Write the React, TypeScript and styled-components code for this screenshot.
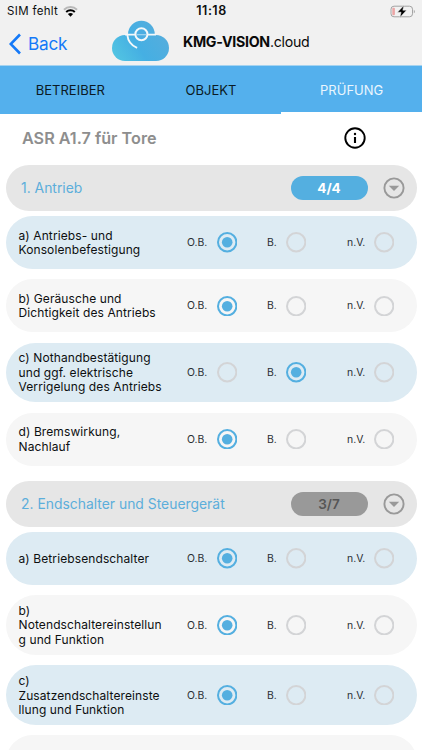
import React, { useState } from "react";
import styled, { createGlobalStyle } from "styled-components";

const GlobalStyle = createGlobalStyle`
  * { box-sizing: border-box; }
  html, body { margin: 0; padding: 0; }
  body {
    background: #fff;
    font-family: Inter, "Liberation Sans", sans-serif;
    color: #0d0f10;
    overflow: hidden;
  }
  button { font: inherit; border: 0; background: none; padding: 0; cursor: pointer; }
`;

const Screen = styled.div`
  width: 422px;
  height: 750px;
  overflow: hidden;
  background: #fff;
`;

const Header = styled.header`
  height: 66px;
  background: #f1f1f1;
  border-bottom: 1px solid #a5d3f0;
`;

const StatusBar = styled.div`
  height: 22px;
  display: grid;
  grid-template-columns: 1fr 60px 1fr;
  align-items: center;
  padding: 0 6px 0 7px;
`;

const Carrier = styled.span`
  display: flex;
  align-items: center;
  gap: 5px;
  font-size: 11.5px;
  letter-spacing: 0.33px;
  line-height: 22px;
`;

const Clock = styled.span`
  font-size: 12.5px;
  font-weight: 600;
  text-align: center;
  letter-spacing: 0.5px;
  line-height: 22px;
`;

const BatteryBox = styled.span`
  display: flex;
  justify-content: flex-end;
`;

const NavBar = styled.div`
  height: 43px;
  display: flex;
  align-items: flex-start;
  padding-left: 9px;
`;

const BackButton = styled.button`
  display: flex;
  align-items: center;
  gap: 7px;
  width: 102px;
  height: 43px;
  color: #1479f8;
  font-size: 17.2px;
  letter-spacing: -0.2px;
`;

const LogoBox = styled.span`
  display: flex;
  width: 72px;
  margin-top: -3px;
`;

const Brand = styled.span`
  height: 39px;
  line-height: 39px;
  font-size: 14.2px;
  letter-spacing: -0.28px;
  color: #0a0a0a;
  b { font-weight: 700; }
`;

const Tabs = styled.nav`
  height: 48px;
  display: grid;
  grid-template-columns: repeat(3, 1fr);
  background: #54b0ed;
`;

const Tab = styled.button<{ $active: boolean }>`
  height: 48px;
  padding-top: 2px;
  font-size: 13px;
  color: ${(p) => (p.$active ? "#eaf6fe" : "#0b1a24")};
  border-bottom: 2px solid ${(p) => (p.$active ? "#fff" : "#54b0ed")};
`;

const TitleRow = styled.div`
  height: 51px;
  display: flex;
  align-items: center;
  justify-content: space-between;
  padding: 0 56px 4px 22px;
`;

const Title = styled.h1`
  margin: 0;
  font-size: 16.2px;
  font-weight: 600;
  color: #8e8e8e;
`;

const Section = styled.section`
  margin: 0 5.5px 15.2px;
`;

const SectionHead = styled.div`
  height: 46px;
  border-radius: 23px;
  background: #e6e6e6;
  display: flex;
  align-items: center;
  padding: 0 12px 0 15.5px;
  margin-bottom: 5.2px;
`;

const SectionName = styled.h2`
  flex: 1;
  margin: 0;
  font-size: 13.9px;
  font-weight: 400;
  color: #5caedb;
`;

const Counter = styled.span<{ $done: boolean }>`
  width: 77px;
  height: 24px;
  line-height: 24px;
  border-radius: 12px;
  text-align: center;
  font-size: 13.5px;
  font-weight: ${(p) => (p.$done ? 700 : 600)};
  background: ${(p) => (p.$done ? "#54afe0" : "#999")};
  color: ${(p) => (p.$done ? "#fff" : "#555")};
`;

const Toggle = styled.button`
  display: flex;
  margin-left: 15px;
`;

const Rows = styled.div`
  display: flex;
  flex-direction: column;
  gap: 10.4px;
`;

const Row = styled.div<{ $tinted: boolean; $lines: number }>`
  height: ${(p) => (p.$lines > 2 ? 59.8 : 52.8)}px;
  border-radius: 30px;
  background: ${(p) => (p.$tinted ? "#ddebf3" : "#f6f6f6")};
  display: grid;
  grid-template-columns: 168.5px 80px 80px 1fr;
  align-items: center;
  padding-left: 13px;
`;

const RowLabel = styled.div`
  padding-top: 1.4px;
  font-size: 12px;
  line-height: 14.6px;
  letter-spacing: 0.1px;
  white-space: pre;
`;

const Choice = styled.button`
  display: flex;
  align-items: center;
`;

const ChoiceName = styled.span<{ $width: number }>`
  width: ${(p) => p.$width}px;
  padding-top: 1px;
  text-align: left;
  font-size: 10.4px;
  line-height: 20px;
  color: #2a2f33;
`;

const Wifi = () => (
  <svg width="15" height="11" viewBox="0 0 15 11" fill="none">
    <path d="M1 3.7a9.3 9.3 0 0 1 13 0" stroke="#b9b9b9" strokeWidth="2" />
    <path d="M3.2 6a6.2 6.2 0 0 1 8.6 0" stroke="#000" strokeWidth="2" />
    <path d="M7.5 10.8 4.9 8.1a3.8 3.8 0 0 1 5.2 0z" fill="#000" />
  </svg>
);

const Battery = () => (
  <svg width="26" height="13" viewBox="0 0 26 13" fill="none">
    <rect x="1" y="1.2" width="21.5" height="10.6" rx="3" stroke="#a3a3a3" />
    <rect x="2.3" y="2.7" width="2.6" height="7.6" rx="1" fill="#eba5a5" />
    <path d="M23.8 4.7c1.4.4 1.4 3.2 0 3.6z" fill="#a3a3a3" />
    <path d="M13.9 0.4 7.5 7.2h3.6L9.9 12.4l6.6-7.2h-3.7z" fill="#000" stroke="#f1f1f1" strokeWidth=".5" />
  </svg>
);

const Chevron = () => (
  <svg width="12" height="22" viewBox="0 0 12 22" fill="none">
    <path d="M11 1.5 1.7 11 11 20.5" stroke="#1479f8" strokeWidth="2.6" />
  </svg>
);

const CloudLogo = () => (
  <svg width="58" height="42" viewBox="0 0 58 42" fill="none">
    <defs>
      <linearGradient id="cloud" x1="5" y1="38" x2="50" y2="8" gradientUnits="userSpaceOnUse">
        <stop stopColor="#51c3e2" />
        <stop offset=".45" stopColor="#45afe3" />
        <stop offset="1" stopColor="#55addd" />
      </linearGradient>
    </defs>
    <path d="M17 15.5a13.4 13.8 0 0 1 26.8 0z" fill="url(#cloud)" />
    <rect x="1" y="16" width="57" height="26" rx="13" fill="url(#cloud)" />
    <path d="M14 15.7h10.5M36 15.7H45M16.3 15.8c.6 6 4 10.6 9.8 13.1" stroke="#f4f8fa" strokeWidth="1.8" />
    <circle cx="30.4" cy="15.3" r="6" fill="#4bade2" stroke="#f4f8fa" strokeWidth="2" />
    <path d="M25.5 15.7h9.8" stroke="#a9d7f0" strokeWidth="1.1" />
  </svg>
);

const Info = () => (
  <svg width="22" height="22" viewBox="0 0 22 22" fill="none">
    <circle cx="11" cy="11" r="9.7" stroke="#000" strokeWidth="1.9" />
    <path d="M11 10v6" stroke="#000" strokeWidth="2.1" />
    <circle cx="11" cy="7" r="1.2" fill="#000" />
  </svg>
);

const DropIcon = () => (
  <svg width="22" height="22" viewBox="0 0 22 22" fill="none">
    <circle cx="11" cy="11" r="9.6" stroke="#999" strokeWidth="1.9" />
    <path d="M5.8 8.7h10.4L11 13.9z" fill="#999" />
  </svg>
);

const Radio = ({ on }: { on: boolean }) => (
  <svg width="20.4" height="20.4" viewBox="0 0 20.4 20.4" fill="none">
    <circle cx="10.2" cy="10.2" r="9.2" stroke={on ? "#54afe0" : "#d3d4d6"} strokeWidth="2" />
    {on && <circle cx="10.2" cy="10.2" r="5.3" fill="#54afe0" />}
  </svg>
);

const OPTIONS = [
  { name: "O.B.", width: 29.8 },
  { name: "B.", width: 18.8 },
  { name: "n.V.", width: 26.8 },
];

type Item = { text: string; lines: number; value: number };

const SECTIONS: { name: string; count: string; done: boolean; items: Item[] }[] = [
  {
    name: "1. Antrieb",
    count: "4/4",
    done: true,
    items: [
      { text: "a) Antriebs- und\nKonsolenbefestigung", lines: 2, value: 0 },
      { text: "b) Geräusche und\nDichtigkeit des Antriebs", lines: 2, value: 0 },
      { text: "c) Nothandbestätigung\nund ggf. elektrische\nVerrigelung des Antriebs", lines: 3, value: 1 },
      { text: "d) Bremswirkung,\nNachlauf", lines: 2, value: 0 },
    ],
  },
  {
    name: "2. Endschalter und Steuergerät",
    count: "3/7",
    done: false,
    items: [
      { text: "a) Betriebsendschalter", lines: 1, value: 0 },
      { text: "b)\nNotendschaltereinstellun\ng und Funktion", lines: 3, value: 0 },
      { text: "c)\nZusatzendschaltereinste\nllung und Funktion", lines: 3, value: 0 },
      { text: "", lines: 2, value: -1 },
    ],
  },
];

const CheckRow = ({ item, tinted }: { item: Item; tinted: boolean }) => {
  const [value, setValue] = useState(item.value);
  return (
    <Row $tinted={tinted} $lines={item.lines}>
      {item.text && (
        <>
          <RowLabel>{item.text}</RowLabel>
          {OPTIONS.map((o, i) => (
            <Choice key={o.name} onClick={() => setValue(i)}>
              <ChoiceName $width={o.width}>{o.name}</ChoiceName>
              <Radio on={value === i} />
            </Choice>
          ))}
        </>
      )}
    </Row>
  );
};

export default function App() {
  const [tab, setTab] = useState(2);
  return (
    <Screen>
      <GlobalStyle />
      <Header>
        <StatusBar>
          <Carrier>SIM fehlt <Wifi /></Carrier>
          <Clock>11:18</Clock>
          <BatteryBox><Battery /></BatteryBox>
        </StatusBar>
        <NavBar>
          <BackButton><Chevron />Back</BackButton>
          <LogoBox><CloudLogo /></LogoBox>
          <Brand><b>KMG-VISION</b>.cloud</Brand>
        </NavBar>
      </Header>
      <Tabs>
        {["BETREIBER", "OBJEKT", "PRÜFUNG"].map((t, i) => (
          <Tab key={t} $active={tab === i} onClick={() => setTab(i)}>{t}</Tab>
        ))}
      </Tabs>
      <TitleRow>
        <Title>ASR A1.7 für Tore</Title>
        <Info />
      </TitleRow>
      {SECTIONS.map((s) => (
        <Section key={s.name}>
          <SectionHead>
            <SectionName>{s.name}</SectionName>
            <Counter $done={s.done}>{s.count}</Counter>
            <Toggle><DropIcon /></Toggle>
          </SectionHead>
          <Rows>
            {s.items.map((item, i) => (
              <CheckRow key={i} item={item} tinted={i % 2 === 0} />
            ))}
          </Rows>
        </Section>
      ))}
    </Screen>
  );
}
